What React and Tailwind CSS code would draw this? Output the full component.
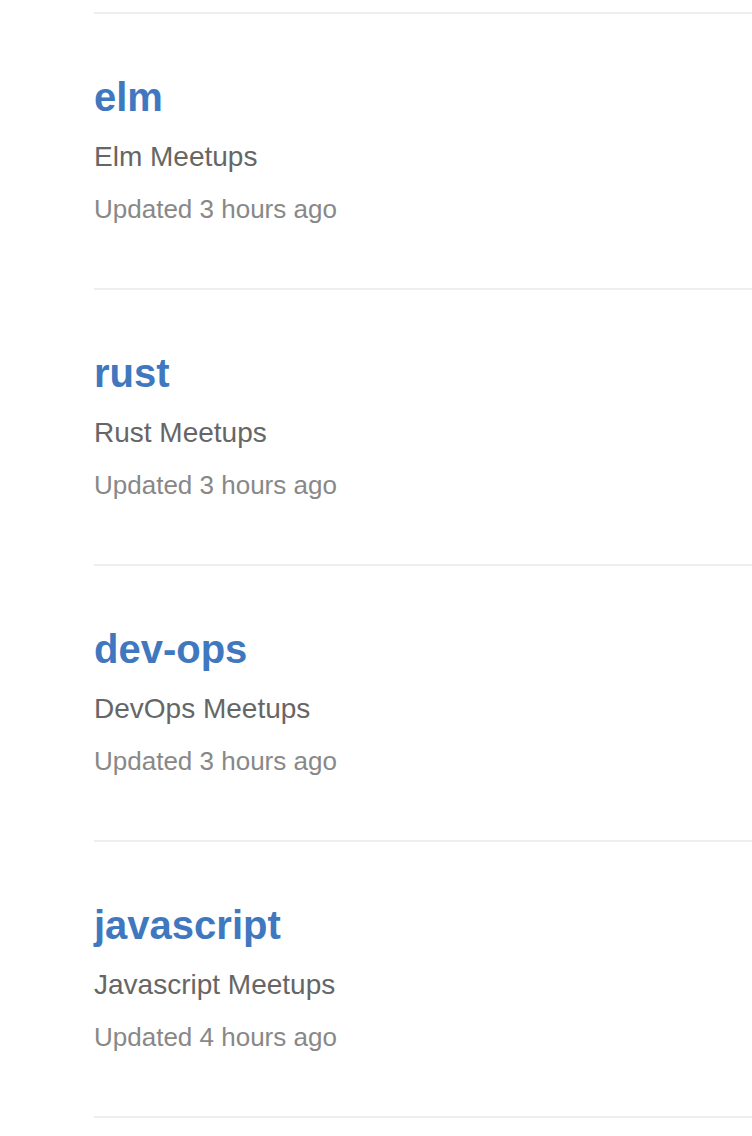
const groups = [
  { name: "elm", title: "Elm Meetups", updated: "Updated 3 hours ago" },
  { name: "rust", title: "Rust Meetups", updated: "Updated 3 hours ago" },
  { name: "dev-ops", title: "DevOps Meetups", updated: "Updated 3 hours ago" },
  { name: "javascript", title: "Javascript Meetups", updated: "Updated 4 hours ago" },
]

function GroupRow({ group }) {
  return (
    <li className="border-t-2 border-[#eeeeee] pt-[63px] pb-[66px]">
      <a href="#" className="block text-[40px] leading-[40px] font-bold text-[#4078c0]">
        {group.name}
      </a>
      <p className="mt-[26px] text-[28px] leading-[28px] text-[#666666]">{group.title}</p>
      <p className="mt-[25px] text-[26px] leading-[26px] text-[#888888]">{group.updated}</p>
    </li>
  )
}

export default function App() {
  return (
    <div
      className="h-[1136px] overflow-hidden bg-white pt-[12px] pl-[94px]"
      style={{ fontFamily: '"Liberation Sans", Arial, sans-serif' }}
    >
      <ul className="w-[700px] border-b-2 border-[#eeeeee]">
        {groups.map((g) => (
          <GroupRow key={g.name} group={g} />
        ))}
      </ul>
    </div>
  )
}
